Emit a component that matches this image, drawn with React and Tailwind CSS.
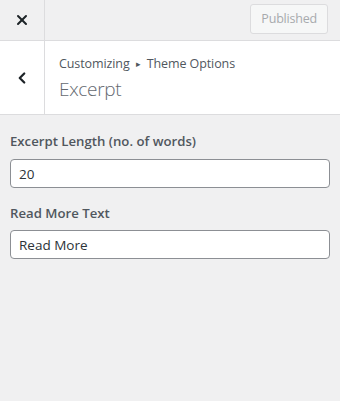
import { ChevronLeft, X } from 'lucide-react';

const font = { fontFamily: '"Open Sans", "Noto Sans", sans-serif' };

export default function App() {
  return (
    <div className="w-[340px] h-[401px] bg-[#f0f0f1] text-[#50575e] overflow-hidden" style={font}>
      <div className="flex h-[41px] border-b border-[#dcdcde]">
        <button className="w-[45px] flex items-center justify-center border-r border-[#dcdcde] text-[#1d2327]">
          <X size={16} strokeWidth={3} />
        </button>
        <div className="flex-1 flex items-start justify-end pt-[4px] pr-[12px]">
          <div className="h-[30px] px-[10px] flex items-center border border-[#dcdcde] rounded-[3px] bg-[#f6f7f7] text-[12.5px] tracking-[-0.2px] text-[#a7aaad]">
            Published
          </div>
        </div>
      </div>
      <div className="flex h-[74px] bg-white border-b border-[#dcdcde]">
        <button className="w-[45px] flex items-center justify-center border-r border-[#dcdcde] text-[#1d2327]">
          <ChevronLeft size={18} strokeWidth={3} />
        </button>
        <div className="flex-1 pl-[14px] pt-[13px]">
          <div className="text-[12.5px] leading-[20px] tracking-[-0.1px] text-[#50575e]">
            Customizing <span className="text-[9px] align-[1px] mx-[3px]">▸</span> Theme Options
          </div>
          <div className="text-[19px] leading-[30px] font-light tracking-[-0.3px] text-[#646970]">Excerpt</div>
        </div>
      </div>
      <div className="px-[10px] pt-[16px] flex flex-col">
        <label className="text-[13.2px] font-semibold leading-[20px] mb-[8px]">Excerpt Length (no. of words)</label>
        <input
          type="text"
          defaultValue="20"
          className="h-[29px] w-full px-[8px] bg-white border border-[#8c8f94] rounded-[4px] text-[13.5px] text-[#2c3338] outline-none"
          style={font}
        />
        <label className="text-[13.2px] font-semibold leading-[20px] mt-[15px] mb-[7px]">Read More Text</label>
        <input
          type="text"
          defaultValue="Read More"
          className="h-[29px] w-full px-[8px] bg-white border border-[#8c8f94] rounded-[4px] text-[13.5px] text-[#2c3338] outline-none"
          style={font}
        />
      </div>
    </div>
  );
}
